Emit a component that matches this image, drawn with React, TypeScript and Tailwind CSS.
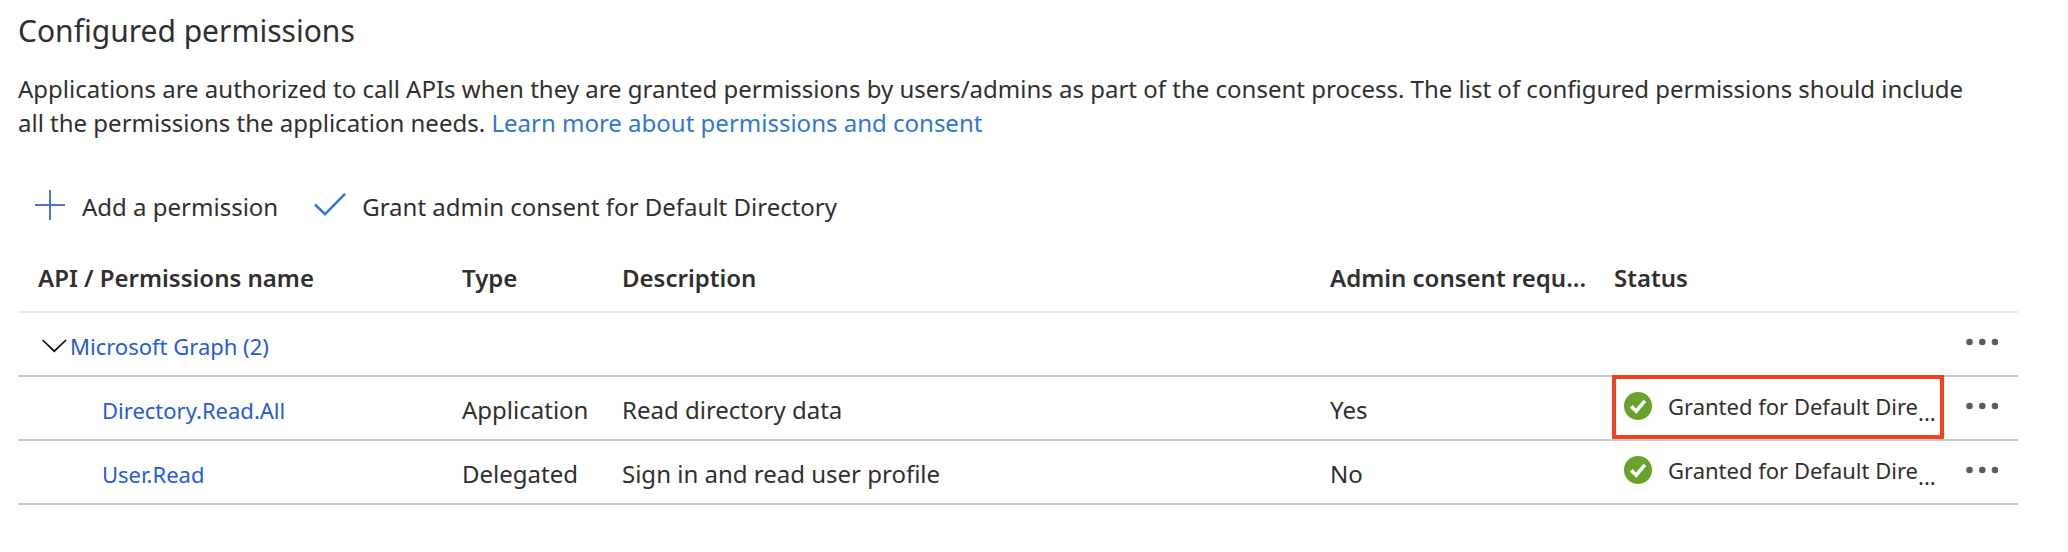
import React from 'react';

type Permission = {
  name: string;
  type: string;
  description: string;
  adminConsent: string;
  status: string;
  highlighted: boolean;
};

const permissions: Permission[] = [
  {
    name: 'Directory.Read.All',
    type: 'Application',
    description: 'Read directory data',
    adminConsent: 'Yes',
    status: 'Granted for Default Dire',
    highlighted: true,
  },
  {
    name: 'User.Read',
    type: 'Delegated',
    description: 'Sign in and read user profile',
    adminConsent: 'No',
    status: 'Granted for Default Dire',
    highlighted: false,
  },
];

function PlusIcon() {
  return (
    <svg className="h-9 w-8" viewBox="0 0 32 36" fill="none" stroke="#4a74c9" strokeWidth="2" aria-hidden="true">
      <path d="M1 16h30M16 1v30" />
    </svg>
  );
}

function CheckIcon() {
  return (
    <svg className="h-9 w-8" viewBox="0 0 32 36" fill="none" stroke="#3277db" strokeWidth="2.6" aria-hidden="true">
      <path d="M1 15.5 11 25.2 31 4.8" />
    </svg>
  );
}

function ChevronIcon() {
  return (
    <svg className="h-3.5 w-7" viewBox="0 0 28 14" fill="none" stroke="#111" strokeWidth="1.7" aria-hidden="true">
      <path d="M2.6 1 14.3 12.2 26 1" />
    </svg>
  );
}

function GrantedIcon() {
  return (
    <svg className="size-7 shrink-0" viewBox="0 0 28 28" aria-hidden="true">
      <circle cx="14" cy="14" r="14" fill="#68a12c" />
      <path d="M7.2 14.2 12.2 19.2 20.8 8.8" fill="none" stroke="#fff" strokeWidth="3.6" />
    </svg>
  );
}

function MoreButton({ label }: { label: string }) {
  return (
    <button type="button" aria-label={label} className="flex h-8 items-center">
      <svg className="h-2 w-8" viewBox="0 0 32 8" fill="#5c5c5c" aria-hidden="true">
        <circle cx="3.5" cy="4" r="3.3" />
        <circle cx="16.3" cy="4" r="3.3" />
        <circle cx="29" cy="4" r="3.3" />
      </svg>
    </button>
  );
}

const cell = 'h-16 border-b-2 border-[#c8c8c8] p-0 pt-1 align-middle';
const statusCell = 'relative h-16 border-b-2 border-[#c8c8c8] p-0 pb-1 align-middle';
const head = 'h-[68px] border-b-2 border-[#e9e9e9] p-0 text-left font-semibold whitespace-nowrap';

export default function App() {
  return (
    <main className="min-h-screen bg-white pt-[11px] pr-[50px] pb-10 pl-[18px] font-['Noto_Sans',sans-serif] text-[24px] leading-[34px] text-[#2f2f2f]">
      <h2 className="text-[30px] leading-10">Configured permissions</h2>
      <p className="mt-[21px] pr-10">
        Applications are authorized to call APIs when they are granted permissions by users/admins as part of the
        consent process. The list of configured permissions should include all the permissions the application needs.{' '}
        <a href="#learn-more" className="text-[#2f76d6]">
          Learn more about permissions and consent
        </a>
      </p>

      <div className="mt-[47px] flex flex-wrap gap-x-9 pl-4">
        <button type="button" className="flex h-10 items-center gap-4">
          <PlusIcon />
          Add a permission
        </button>
        <button type="button" className="flex h-10 items-center gap-4">
          <CheckIcon />
          Grant admin consent for Default Directory
        </button>
      </div>

      <table className="mt-[18px] w-full table-fixed border-separate border-spacing-0">
        <thead>
          <tr>
            <th scope="col" className={`${head} w-[22.2%] pl-5`}>API / Permissions name</th>
            <th scope="col" className={`${head} w-[8%]`}>Type</th>
            <th scope="col" className={`${head} w-[35.4%]`}>Description</th>
            <th scope="col" className={`${head} w-[14.2%]`}>Admin consent requ...</th>
            <th scope="col" className={`${head} w-[16.6%]`}>Status</th>
            <td className={`${head} w-[3.6%]`} />
          </tr>
        </thead>
        <tbody>
          <tr>
            <td colSpan={5} className={cell}>
              <div className="flex items-center pl-[22px]">
                <button type="button" aria-label="Collapse Microsoft Graph">
                  <ChevronIcon />
                </button>
                <a href="#microsoft-graph" className="pl-0.5 text-[22px] text-[#255bd6]">
                  Microsoft Graph (2)
                </a>
              </div>
            </td>
            <td className={statusCell}>
              <div className="flex justify-end pr-5">
                <MoreButton label="More actions for Microsoft Graph" />
              </div>
            </td>
          </tr>
          {permissions.map((p) => (
            <tr key={p.name}>
              <td className={cell}>
                <a href={`#${p.name}`} className="ml-[84px] text-[22px] text-[#255bd6]">
                  {p.name}
                </a>
              </td>
              <td className={cell}>{p.type}</td>
              <td className={cell}>{p.description}</td>
              <td className={cell}>{p.adminConsent}</td>
              <td className={statusCell}>
                <div className="flex h-11 items-center pl-2.5 text-[22px] leading-8 whitespace-nowrap">
                  <GrantedIcon />
                  <span className="pl-4">{p.status}</span>
                  <span className="self-end">...</span>
                </div>
                {p.highlighted && (
                  <div className="pointer-events-none absolute -top-0.5 right-0.5 bottom-0 -left-0.5 border-4 border-[#f43f22]" />
                )}
              </td>
              <td className={statusCell}>
                <div className="flex justify-end pr-5">
                  <MoreButton label={`More actions for ${p.name}`} />
                </div>
              </td>
            </tr>
          ))}
        </tbody>
      </table>
    </main>
  );
}
